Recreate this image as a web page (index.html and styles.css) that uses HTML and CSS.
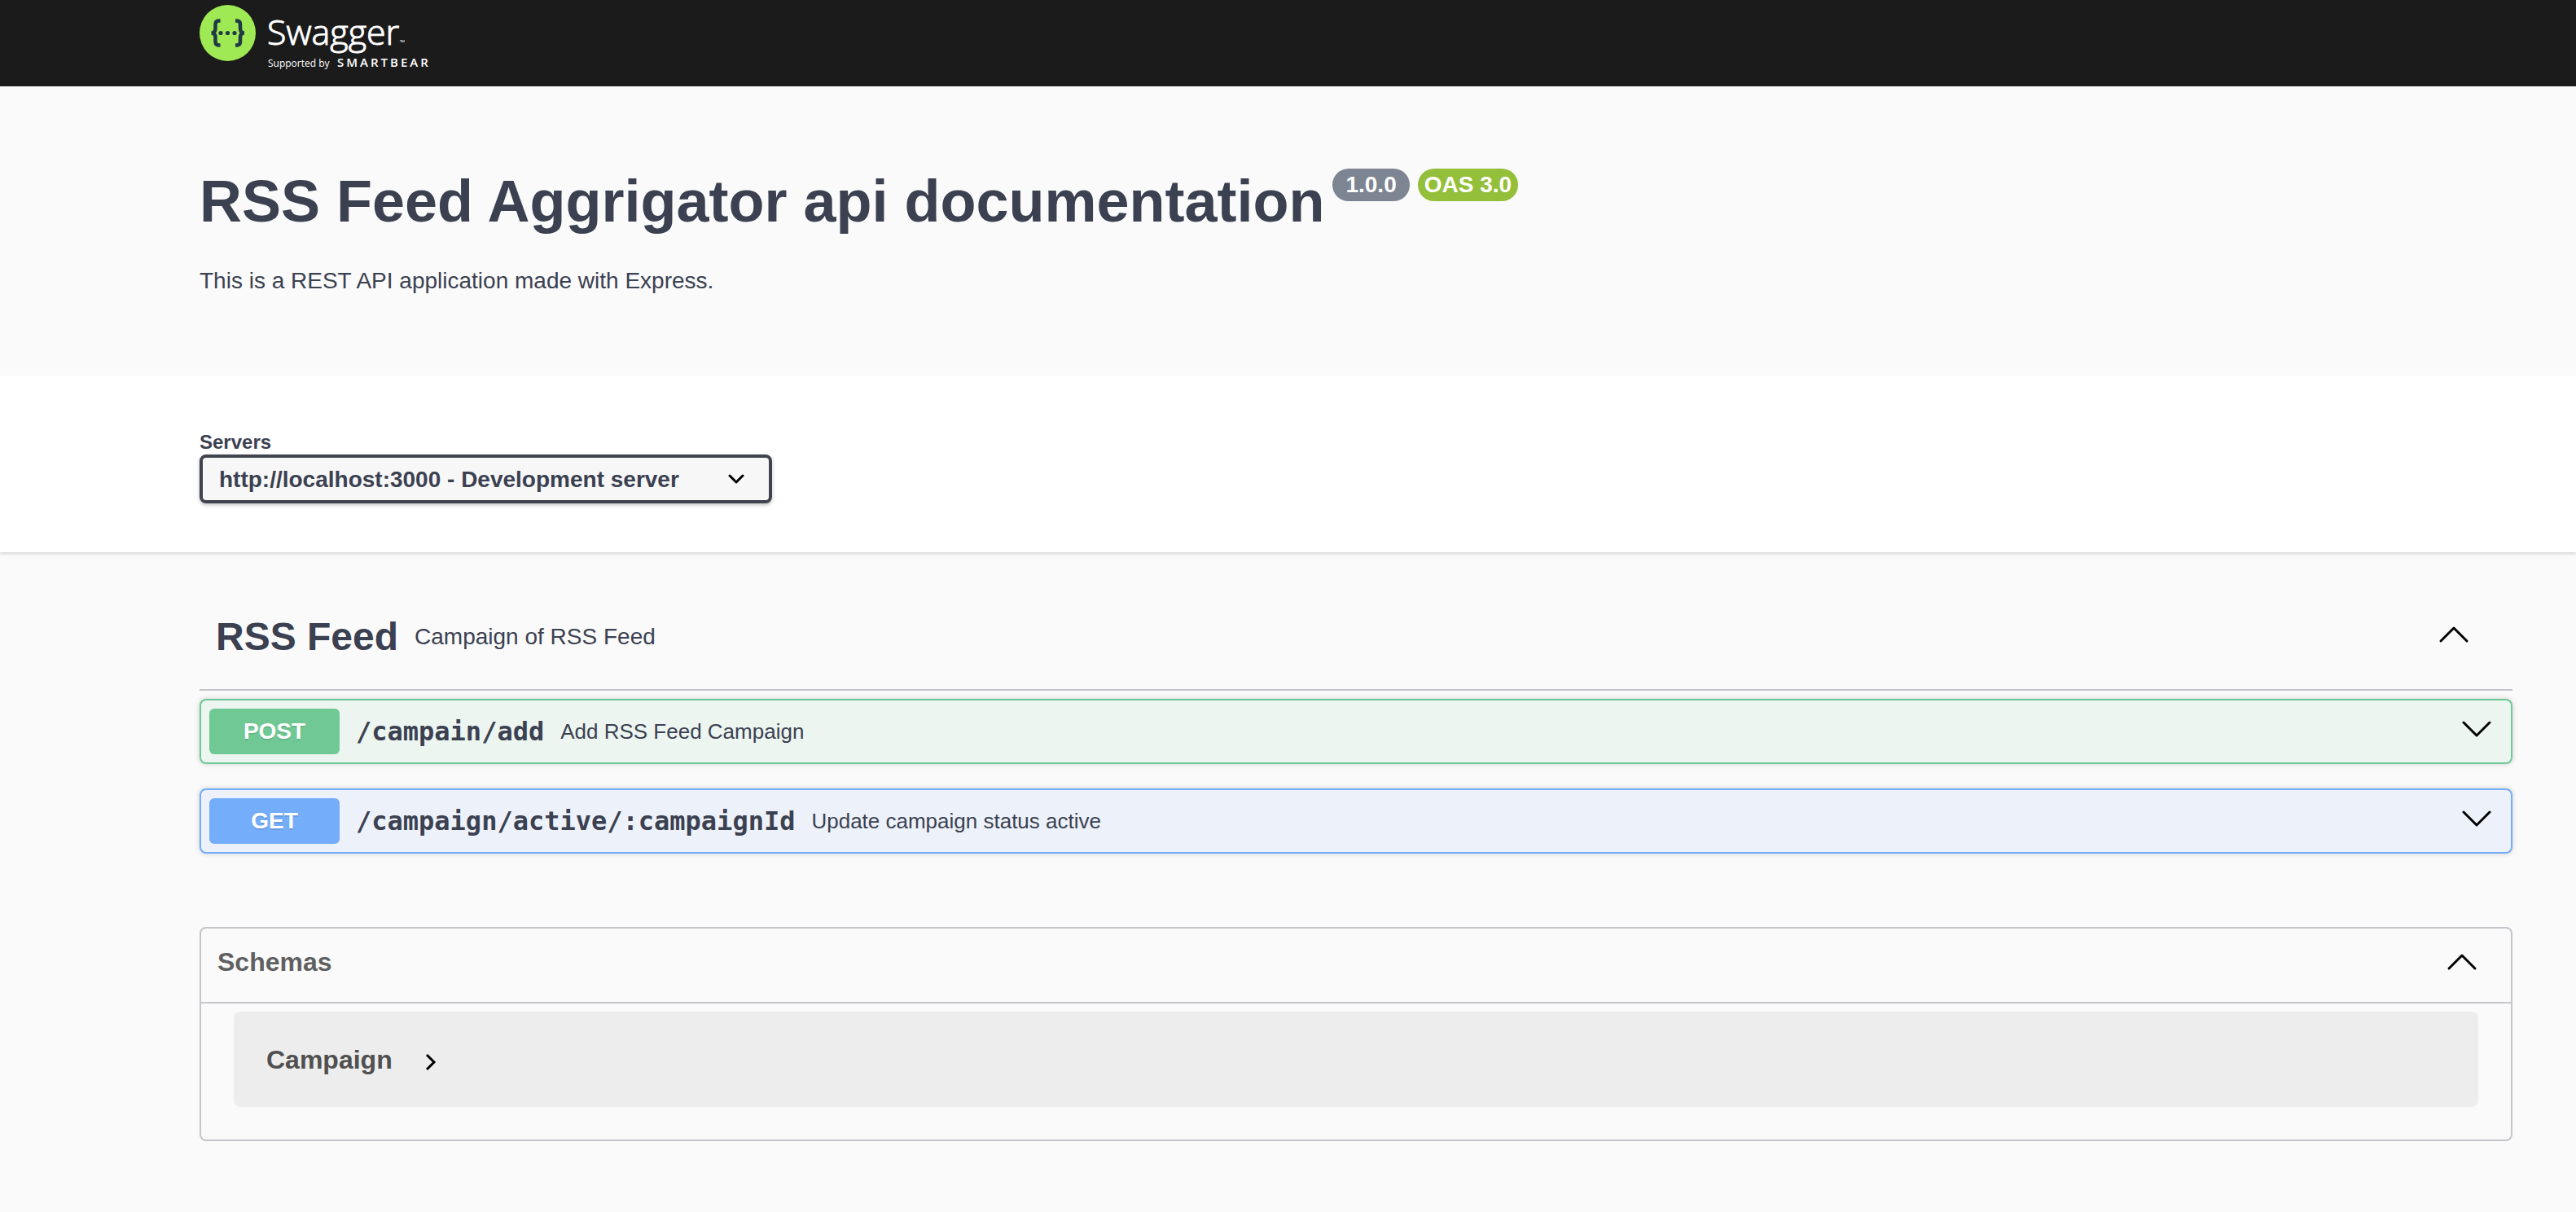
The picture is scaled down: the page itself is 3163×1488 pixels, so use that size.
FILE: index.html
```html
<!DOCTYPE html>
<html lang="en">
<head>
  <meta charset="utf-8">
  <meta name="viewport" content="width=device-width, initial-scale=1">
  <title>Swagger UI</title>
  <link rel="stylesheet" href="styles.css">
</head>
<body>
  <header class="topbar wrapper">
    <a class="logo" href="#" aria-label="Swagger">
      <svg width="290" height="90" viewBox="0 0 290 90">
        <circle cx="34.500" cy="40.500" r="34.500" fill="#9fe954"/>
        <g fill="none" stroke="#1f3a45" stroke-width="4.500">
          <path d="M25.500 25.500h-2q-4 0-4 4.500v5q0 5.500-5 5.500 5 0 5 5.500v5q0 4.500 4 4.500h2"/>
          <path d="M44 25.500h2q4 0 4 4.500v5q0 5.500 5 5.500-5 0-5 5.500v5q0 4.500-4 4.500h-2"/>
        </g>
        <g fill="#1f3a45">
          <circle cx="26" cy="40.500" r="2.600"/>
          <circle cx="34.500" cy="40.500" r="2.600"/>
          <circle cx="43" cy="40.500" r="2.600"/>
        </g>
        <text class="logo-name" x="83" y="55">Swagger</text>
        <text class="logo-tm" x="246" y="55">™</text>
        <text class="logo-by" x="84" y="82">Supported by</text>
        <text class="logo-brand" x="169" y="82">SMARTBEAR</text>
      </svg>
    </a>
  </header>

  <main>
    <section class="info wrapper">
      <div class="title-row">
        <h1 class="title">RSS Feed Aggrigator api documentation</h1>
        <span class="badge badge-version">1.0.0</span>
        <span class="badge badge-oas">OAS 3.0</span>
      </div>
      <p class="description">This is a REST API application made with Express.</p>
    </section>

    <section class="servers wrapper">
      <label class="servers-label" for="servers">Servers</label>
      <div class="select-box">
        <select class="select" id="servers">
          <option>http://localhost:3000 - Development server</option>
        </select>
        <svg class="select-arrow" width="20" height="12" viewBox="0 0 20 12"><path d="M2 2l8 8 8-8"/></svg>
      </div>
    </section>

    <section class="tag wrapper">
      <div class="tag-header">
        <h2 class="tag-name">RSS Feed</h2>
        <p class="tag-text">Campaign of RSS Feed</p>
        <button class="icon-button" type="button" aria-label="Collapse RSS Feed" aria-expanded="true">
          <svg class="arrow" width="40" height="40" viewBox="0 0 40 40"><path d="M4 25l16-16 16 16"/></svg>
        </button>
      </div>
      <div class="operations">
        <button class="operation operation-post" type="button" aria-expanded="false">
          <span class="method">POST</span>
          <span class="path">/campain/add</span>
          <span class="summary">Add RSS Feed Campaign</span>
          <svg class="arrow" width="40" height="40" viewBox="0 0 40 40"><path d="M4 9l16 16 16-16"/></svg>
        </button>
        <button class="operation operation-get" type="button" aria-expanded="false">
          <span class="method">GET</span>
          <span class="path">/campaign/active/:campaignId</span>
          <span class="summary">Update campaign status active</span>
          <svg class="arrow" width="40" height="40" viewBox="0 0 40 40"><path d="M4 9l16 16 16-16"/></svg>
        </button>
      </div>
    </section>

    <section class="wrapper">
      <div class="schemas">
        <div class="schemas-header">
          <h2 class="schemas-title">Schemas</h2>
          <button class="icon-button" type="button" aria-label="Collapse schemas" aria-expanded="true">
            <svg class="arrow" width="40" height="36" viewBox="0 0 40 36"><path d="M4 26l16-16 16 16"/></svg>
          </button>
        </div>
        <div class="schemas-body">
          <button class="model" type="button" aria-expanded="false">
            Campaign
            <svg class="model-arrow" width="20" height="28" viewBox="0 0 20 28"><path d="M6 8l9 9-9 9"/></svg>
          </button>
        </div>
      </div>
    </section>
  </main>
</body>
</html>
```

FILE: styles.css
```css
* {
  box-sizing: border-box;
}

body {
  margin: 0;
  background: #fafafa;
  color: #3b4151;
  font-family: "Liberation Sans", Arial, Helvetica, sans-serif;
  font-size: 28px;
  line-height: 32px;
}

h1,
h2,
p {
  margin: 0;
}

button {
  margin: 0;
  border: 0;
  padding: 0;
  background: none;
  color: inherit;
  font: inherit;
  cursor: pointer;
}

svg {
  display: block;
}

.wrapper {
  padding-left: 245px;
  padding-right: 78px;
}

/* Top bar */
.topbar {
  background: #1b1b1b;
  padding-bottom: 16px;
}

.logo {
  display: inline-block;
  vertical-align: top;
}

.logo text {
  fill: #fff;
  font-family: "Open Sans", "Noto Sans", sans-serif;
}

.logo .logo-name {
  font-size: 43px;
  font-weight: 300;
  stroke: #fff;
  stroke-width: 1px;
}

.logo .logo-tm {
  font-size: 8px;
}

.logo .logo-by {
  font-size: 12px;
}

.logo .logo-brand {
  font-size: 15px;
  font-weight: 600;
  letter-spacing: 3px;
}

/* API info */
.info {
  padding-top: 101px;
  padding-bottom: 100px;
}

.title-row {
  display: flex;
  align-items: flex-start;
  gap: 10px;
}

.title {
  font-size: 72px;
  line-height: 80px;
}

.badge {
  border-radius: 20px;
  color: #fff;
  font-weight: 700;
  line-height: 40px;
}

.badge-version {
  padding: 0 16px;
  background: #7d8492;
}

.badge-oas {
  padding: 0 8px;
  background: #93bf3a;
}

.description {
  margin-top: 42px;
}

/* Servers */
.servers {
  padding-top: 67px;
  padding-bottom: 60px;
  background: #fff;
  box-shadow: 0 2px 4px rgba(0, 0, 0, 0.15);
}

.servers-label {
  display: block;
  font-size: 24px;
  font-weight: 700;
  line-height: 30px;
}

.select-box {
  display: inline-grid;
  align-items: center;
  vertical-align: top;
}

.select,
.select-arrow {
  grid-area: 1 / 1;
}

.select {
  height: 60px;
  border: 4px solid #41444e;
  border-radius: 8px;
  padding: 0 110px 0 20px;
  appearance: none;
  background: #f7f7f7;
  box-shadow: 0 2px 4px rgba(0, 0, 0, 0.25);
  color: #3b4151;
  font: 700 28px "Liberation Sans", Arial, sans-serif;
}

.select-arrow {
  justify-self: end;
  margin-right: 34px;
  fill: none;
  stroke: #000;
  stroke-width: 3;
  stroke-linecap: round;
  stroke-linejoin: round;
  pointer-events: none;
}

/* Tag and its operations */
.tag {
  padding-top: 60px;
}

.tag-header {
  display: flex;
  align-items: center;
  gap: 20px;
  border-bottom: 2px solid #c4c5ca;
  padding: 16px 52px 36px 20px;
}

.tag-name {
  font-size: 48px;
  line-height: 56px;
}

.icon-button {
  margin-left: auto;
}

.arrow {
  fill: none;
  stroke: #000;
  stroke-width: 3;
  stroke-linecap: round;
  stroke-linejoin: round;
}

.operations {
  display: grid;
  gap: 30px;
  padding-top: 10px;
}

.operation {
  display: flex;
  align-items: center;
  gap: 20px;
  border: 2px solid;
  border-radius: 8px;
  padding: 10px 22px 10px 10px;
  box-shadow: 0 0 6px rgba(0, 0, 0, 0.19);
  text-align: left;
}

.operation-post {
  border-color: #70c995;
  background: #ecf5f0;
}

.operation-get {
  border-color: #74adf9;
  background: #edf2fa;
}

.method {
  width: 160px;
  border-radius: 6px;
  color: #fff;
  font-weight: 700;
  line-height: 56px;
  text-align: center;
  text-shadow: 0 2px 0 rgba(0, 0, 0, 0.1);
}

.operation-post .method {
  background: #70c995;
}

.operation-get .method {
  background: #74adf9;
}

.path {
  font-family: "DejaVu Sans Mono", monospace;
  font-size: 32px;
  font-weight: 700;
}

.summary {
  font-size: 26px;
}

.operation .arrow {
  margin-left: auto;
}

/* Schemas */
.schemas {
  margin: 90px 0 80px;
  border: 2px solid #c4c5ca;
  border-radius: 8px;
}

.schemas-header {
  display: flex;
  align-items: center;
  border-bottom: 2px solid #c4c5ca;
  padding: 23px 40px 31px 20px;
}

.schemas-title {
  color: #606060;
  font-size: 32px;
  line-height: 36px;
}

.schemas-body {
  padding: 10px 40px 40px;
}

.model {
  display: flex;
  align-items: center;
  gap: 36px;
  width: 100%;
  border-radius: 8px;
  padding: 41px 40px 40px;
  background: #ededed;
  color: #505050;
  font-size: 32px;
  font-weight: 700;
  line-height: 36px;
}

.model-arrow {
  fill: none;
  stroke: #000;
  stroke-width: 3;
}
```
